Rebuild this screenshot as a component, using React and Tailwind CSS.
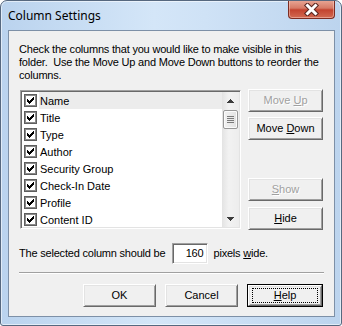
import React from "react";

const items = [
  "Name",
  "Title",
  "Type",
  "Author",
  "Security Group",
  "Check-In Date",
  "Profile",
  "Content ID",
];

// classic 7x7 tick, one rect per pixel run
const tick = [
  [9, 3, 1], [8, 4, 2], [3, 5, 1], [7, 5, 3], [3, 6, 2], [6, 6, 3],
  [3, 7, 5], [4, 8, 3], [5, 9, 1],
];

function CheckBox() {
  return (
    <svg width="13" height="13" viewBox="0 0 13 13" shapeRendering="crispEdges">
      <rect x="0" y="0" width="13" height="13" fill="#5e5e5e" />
      <rect x="1" y="1" width="11" height="11" fill="#8a8a8a" />
      <rect x="2" y="2" width="9" height="9" fill="#ffffff" />
      {tick.map(([x, y, w]) => (
        <rect key={x + "-" + y} x={x} y={y} width={w} height="1" fill="#000" />
      ))}
    </svg>
  );
}

function Btn({ children, disabled, isDefault, className = "" }) {
  return (
    <button
      className={
        "flex h-[23px] items-center justify-center bg-[#f0f0f0] p-0 text-[11px] " +
        (isDefault ? "border border-black " : "") +
        (disabled ? "text-[#a0a0a0] [text-shadow:1px_1px_0_#fff] " : "text-black ") +
        className
      }
    >
      <span className="flex h-full w-full items-center justify-center border border-t-white border-l-white border-r-[#696969] border-b-[#696969] shadow-[inset_1px_1px_0_#e3e3e3,inset_-1px_-1px_0_#a0a0a0]">
        {isDefault ? (
          <span className="flex h-[15px] w-[calc(100%-6px)] items-center justify-center border border-dotted border-black">
            <span>{children}</span>
          </span>
        ) : (
          <span>{children}</span>
        )}
      </span>
    </button>
  );
}

export default function App() {
  return (
    <div className="flex h-[326px] w-[342px] flex-col overflow-hidden rounded-t-[7px] rounded-b-[3px] border border-[#56687f] bg-[linear-gradient(90deg,#bad3ee,#d4e6f8_45%,#cfe2f6_60%,#bcd4ee)] font-['Liberation_Sans',Arial,sans-serif] shadow-[inset_0_0_0_1px_rgba(255,255,255,0.55)]">
      <div className="flex h-[29px] items-start">
        <span className="pl-[7px] pt-[6px] font-['Noto_Sans',sans-serif] text-[12px] text-black">
          Column Settings
        </span>
        <div className="-mt-px ml-auto mr-[6px] flex h-[19px] w-[47px] items-center justify-center rounded-b-[4px] border border-t-0 border-[#7c2c22] bg-[linear-gradient(180deg,#e9a998_0%,#d67a66_45%,#c3432f_55%,#d26a52_100%)] shadow-[inset_0_0_0_1px_rgba(255,220,210,0.45)]">
          <svg width="17" height="13" viewBox="0 0 17 13">
            <path
              d="M4.5 2.5 L12.5 10.5 M12.5 2.5 L4.5 10.5"
              stroke="#5a2620"
              strokeWidth="5"
              strokeLinecap="square"
            />
            <path
              d="M4.5 2.5 L12.5 10.5 M12.5 2.5 L4.5 10.5"
              stroke="#ffffff"
              strokeWidth="3"
              strokeLinecap="square"
            />
          </svg>
        </div>
      </div>

      <div className="ml-[7px] mr-[6px] flex h-[287px] flex-col border border-[#7d90a7] bg-[#f0f0f0] px-[10px] pt-[12px] text-[11px] leading-[13px] tracking-[-0.2px] text-black">
        <p className="m-0 whitespace-nowrap">
          Check the columns that you would like to make visible in this
          <br />
          folder.&nbsp; Use the Move Up and Move Down buttons to reorder the
          <br />
          columns.
        </p>

        <div className="mt-[7px] flex items-start gap-[7px]">
          <div className="ml-px mt-px flex h-[139px] w-[221px] overflow-hidden border border-t-[#a0a0a0] border-l-[#a0a0a0] border-r-white border-b-white bg-white shadow-[inset_1px_1px_0_#696969,inset_-1px_-1px_0_#e3e3e3]">
            <div className="flex flex-1 flex-col overflow-hidden pl-[3px] pt-px tracking-normal">
              {items.map((it, i) => (
                <div key={it} className="flex h-[17px] shrink-0 items-center">
                  <CheckBox />
                  <span
                    className={
                      "ml-[2px] flex h-[17px] flex-1 items-center pl-px pt-px " +
                      (i === 0 ? "bg-[#ececec]" : "")
                    }
                  >
                    {it}
                  </span>
                </div>
              ))}
            </div>
            <div className="my-px mr-px flex w-[17px] flex-col items-center bg-[linear-gradient(90deg,#e3e3e3,#f2f2f2_40%,#ededed)]">
              <div className="flex h-[17px] w-full items-center justify-center">
                <svg width="7" height="4" viewBox="0 0 7 4" shapeRendering="crispEdges">
                  <path d="M3 0h1v1h1v1h1v1h1v1h-7v-1h1v-1h1v-1h1z" fill="#3c3c3c" />
                </svg>
              </div>
              <div className="mt-px flex h-[19px] w-[15px] flex-col items-center justify-center gap-px rounded-[2px] border border-[#979797] bg-[linear-gradient(90deg,#f2f2f2,#e2e2e2)] shadow-[inset_0_0_0_1px_#fbfbfb]">
                <div className="h-px w-[7px] bg-[#7a7a7a]" />
                <div className="h-px w-[7px] bg-[#7a7a7a]" />
                <div className="h-px w-[7px] bg-[#7a7a7a]" />
                <div className="h-px w-[7px] bg-[#7a7a7a]" />
              </div>
              <div className="flex-1" />
              <div className="flex h-[17px] w-full items-center justify-center">
                <svg width="7" height="4" viewBox="0 0 7 4" shapeRendering="crispEdges">
                  <path d="M0 0h7v1h-1v1h-1v1h-1v1h-1v-1h-1v-1h-1v-1h-1z" fill="#3c3c3c" />
                </svg>
              </div>
            </div>
          </div>

          <div className="flex w-[75px] flex-col tracking-normal">
            <Btn disabled>
              Move <u>U</u>p
            </Btn>
            <Btn className="mt-[5px]">
              Move <u>D</u>own
            </Btn>
            <Btn disabled className="mt-[38px]">
              <u>S</u>how
            </Btn>
            <Btn className="mt-[6px]">
              <u>H</u>ide
            </Btn>
          </div>
        </div>

        <div className="mt-[13px] flex items-center">
          <span>The selected column should be</span>
          <div className="ml-[7px] flex h-[21px] w-[36px] items-center justify-end border border-t-[#a0a0a0] border-l-[#a0a0a0] border-r-white border-b-white bg-white pr-[4px] shadow-[inset_1px_1px_0_#696969,inset_-1px_-1px_0_#e3e3e3]">
            160
          </div>
          <span className="ml-[5px]">
            pixels <u>w</u>ide.
          </span>
        </div>

        <div className="mt-[8px] h-[2px] border-t border-t-[#a0a0a0] border-b border-b-white" />

        <div className="mt-[10px] flex justify-end gap-[9px] pr-px tracking-normal">
          <Btn className="w-[73px]">OK</Btn>
          <Btn className="w-[73px]">Cancel</Btn>
          <Btn isDefault className="w-[76px]">
            <u>H</u>elp
          </Btn>
        </div>
      </div>
    </div>
  );
}
